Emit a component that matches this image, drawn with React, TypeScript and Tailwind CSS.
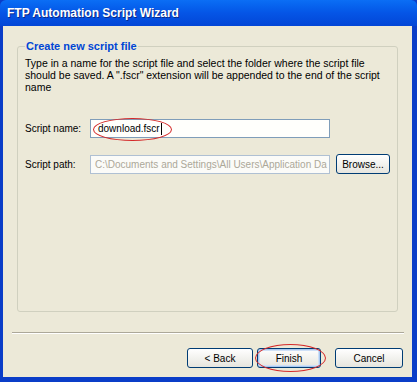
import React from "react";

const font = { fontFamily: '"Liberation Sans", Arial, sans-serif' };

function XpButton({ label, isDefault }: { label: string; isDefault?: boolean }) {
  return (
    <div
      className={
        "flex h-[20px] items-center justify-center rounded-[3px] border border-[#003C74] bg-gradient-to-b from-white to-[#E6E5DE] text-[10px] text-black " +
        (isDefault ? "shadow-[inset_0_0_0_1px_#A8C8F0,inset_0_0_0_2px_#CFE0F7]" : "")
      }
      style={font}
    >
      {label}
    </div>
  );
}

export default function App() {
  return (
    <div className="flex h-[382px] w-[417px] flex-col bg-[#0A3DC8]" style={font}>
      {/* title bar */}
      <div className="flex h-[26px] items-center rounded-t-[6px] bg-gradient-to-b from-[#0B6EF5] via-[#0555E6] to-[#0346D6] pl-[7px]">
        <span className="text-[12px] font-bold text-white [text-shadow:1px_1px_0_#0A2A8A]">
          FTP Automation Script Wizard
        </span>
      </div>

      <div className="mb-[5px] ml-[3px] mr-[5px] flex flex-1 flex-col bg-[#ECE9D8]">
        {/* group box */}
        <fieldset className="mx-[14px] mt-[14px] h-[272px] rounded-[3px] border border-[#D0D0BF] px-[7px]">
          <legend className="px-[1px] text-[11px] font-bold leading-[12px] text-[#0046D5]">
            Create new script file
          </legend>
          <p className="mt-[5px] whitespace-nowrap text-[10.5px] leading-[12px] text-black">
            Type in a name for the script file and select the folder where the script file
            <br />
            should be saved. A ".fscr" extension will be appended to the end of the script
            <br />
            name
          </p>

          <div className="mt-[26px] flex items-center">
            <span className="w-[65px] text-[10px] text-black">Script name:</span>
            <div className="relative flex h-[19px] w-[240px] items-center border border-[#7F9DB9] bg-[#FFFFFC] pl-[7px] text-[10px] text-black">
              download.fscr
              <span className="ml-[1px] h-[12px] w-px bg-black" />
              <div className="absolute left-[2px] top-[-2px] h-[23px] w-[79px] rounded-[50%] border-[1.5px] border-[#D42A2A]" />
            </div>
          </div>

          <div className="mt-[16px] flex items-center">
            <span className="w-[65px] text-[10px] text-black">Script path:</span>
            <div className="flex h-[19px] w-[240px] items-center whitespace-nowrap border border-[#AFC0D3] bg-[#FBFBF8] pl-[4px] text-[10px] text-[#ACA899]">
              C:\Documents and Settings\All Users\Application Da
            </div>
            <div className="ml-[6px] w-[54px]">
              <XpButton label="Browse..." />
            </div>
          </div>
        </fieldset>

        {/* separator */}
        <div className="ml-[9px] mr-[8px] mt-[20px] h-[2px] border-b border-t border-b-white border-t-[#ACA899]" />

        {/* buttons */}
        <div className="mt-[14px] flex justify-end pr-[9px]">
          <div className="w-[66px]">
            <XpButton label="< Back" />
          </div>
          <div className="relative ml-[4px] w-[64px]">
            <XpButton label="Finish" isDefault />
            <div className="absolute left-[-2px] top-[-4px] h-[28px] w-[71px] rounded-[50%] border-[1.5px] border-[#D42A2A]" />
          </div>
          <div className="ml-[14px] w-[68px]">
            <XpButton label="Cancel" />
          </div>
        </div>
      </div>
    </div>
  );
}
